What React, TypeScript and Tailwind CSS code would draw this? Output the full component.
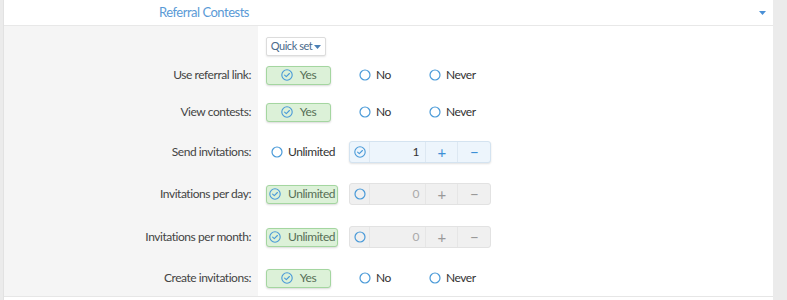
import React from "react";

const CheckCircle = () => (
  <svg width="12" height="12" viewBox="0 0 12 12" fill="none" className="shrink-0">
    <circle cx="6" cy="6" r="5.2" stroke="#4a9ad8" strokeWidth="1.1" />
    <path d="M3.6 6.1 L5.3 7.7 L8.4 4.5" stroke="#4a9ad8" strokeWidth="1.1" strokeLinecap="round" strokeLinejoin="round" />
  </svg>
);

const RadioCircle = () => (
  <svg width="12" height="12" viewBox="0 0 12 12" fill="none" className="shrink-0">
    <circle cx="6" cy="6" r="5" stroke="#4a9ad8" strokeWidth="1.2" />
  </svg>
);

const Caret = ({ color = "#4a7fb5" }: { color?: string }) => (
  <svg width="7" height="4" viewBox="0 0 7 4">
    <path d="M0 0 L7 0 L3.5 4 Z" fill={color} />
  </svg>
);

const GreenButton = ({ label, width }: { label: string; width: string }) => (
  <div
    className={`${width} h-[19px] flex items-center justify-center gap-[7px] rounded-[3px] border border-[#a4d6a0] bg-[#dcf1d8] text-[12px] text-[#566e56] shadow-[0_1px_2px_rgba(0,0,0,0.15)]`}
  >
    <CheckCircle />
    <span>{label}</span>
  </div>
);

const Radio = ({ label, className = "" }: { label: string; className?: string }) => (
  <div className={`flex items-center gap-[5px] text-[12px] text-[#333] ${className}`}>
    <RadioCircle />
    <span>{label}</span>
  </div>
);

const YesNoNever = () => (
  <div className="flex items-center">
    <GreenButton label="Yes" width="w-[65px]" />
    <Radio label="No" className="ml-[28px] w-[70px]" />
    <Radio label="Never" />
  </div>
);

const NumberBox = ({ value, active }: { value: string; active: boolean }) => (
  <div
    className={`ml-[11px] flex h-[22px] w-[142px] items-stretch rounded-[3px] border text-[12px] ${
      active
        ? "border-[#d4e3f0] bg-[#edf5fc] shadow-[0_1px_2px_rgba(0,0,0,0.12)]"
        : "border-[#e2e2e2] bg-[#f0f0f0]"
    }`}
  >
    <div className={`flex w-[20px] items-center justify-center border-r ${active ? "border-[#dde8f2]" : "border-[#e6e6e6]"}`}>
      {active ? <CheckCircle /> : <RadioCircle />}
    </div>
    <div className={`flex flex-1 items-center justify-end pr-[6px] ${active ? "text-[#333]" : "text-[#aaa]"}`}>
      {value}
    </div>
    <div
      className={`flex w-[32px] items-center justify-center border-l text-[15px] ${
        active ? "border-[#dde8f2] text-[#3c8fd6]" : "border-[#e6e6e6] text-[#999]"
      }`}
    >
      +
    </div>
    <div
      className={`flex w-[33px] items-center justify-center border-l text-[15px] ${
        active ? "border-[#dde8f2] text-[#3c8fd6]" : "border-[#e6e6e6] text-[#999]"
      }`}
    >
      −
    </div>
  </div>
);

const Row = ({ label, height, children }: { label: string; height: string; children?: React.ReactNode }) => (
  <div className={`grid grid-cols-[254px_1fr] ${height}`}>
    <div className="flex items-center justify-end bg-[#f5f5f5] pr-[7px] text-[12px] text-[#444]">{label}</div>
    <div className="flex items-center pl-[8px]">{children}</div>
  </div>
);

export default function App() {
  return (
    <div
      className="flex h-[300px] w-[787px] overflow-hidden bg-[#ebebeb] tracking-[-0.45px]"
      style={{ fontFamily: 'Lato, "Noto Sans", sans-serif' }}
    >
      <div className="ml-[3px] w-[770px] border-l border-[#e2e2e2] bg-white">
        <div className="flex h-[26px] items-center justify-between border-b border-[#e8e8e8] pl-[155px] pr-[7px]">
          <span className="text-[13px] tracking-[-0.5px] text-[#5a9ad6]">Referral Contests</span>
          <Caret color="#4a90d6" />
        </div>
        <div className="border-b border-[#e6e6e6]">
          <div className="grid h-[30px] grid-cols-[254px_1fr]">
            <div className="bg-[#f5f5f5]" />
            <div className="flex items-end pl-[8px]">
              <div className="flex h-[19px] w-[60px] items-center justify-center gap-[2px] rounded-[2px] border border-[#dcdcdc] bg-white text-[11px] text-[#4a6a8a] shadow-[0_1px_2px_rgba(0,0,0,0.1)]">
                <span>Quick set</span>
                <Caret />
              </div>
            </div>
          </div>
          <Row label="Use referral link:" height="h-[38px]">
            <YesNoNever />
          </Row>
          <Row label="View contests:" height="h-[36px]">
            <YesNoNever />
          </Row>
          <Row label="Send invitations:" height="h-[44px]">
            <Radio label="Unlimited" className="ml-[5px] w-[67px]" />
            <NumberBox value="1" active />
          </Row>
          <Row label="Invitations per day:" height="h-[40px]">
            <GreenButton label="Unlimited" width="w-[72px]" />
            <NumberBox value="0" active={false} />
          </Row>
          <Row label="Invitations per month:" height="h-[46px]">
            <GreenButton label="Unlimited" width="w-[72px]" />
            <NumberBox value="0" active={false} />
          </Row>
          <Row label="Create invitations:" height="h-[36px]">
            <YesNoNever />
          </Row>
        </div>
      </div>
    </div>
  );
}
